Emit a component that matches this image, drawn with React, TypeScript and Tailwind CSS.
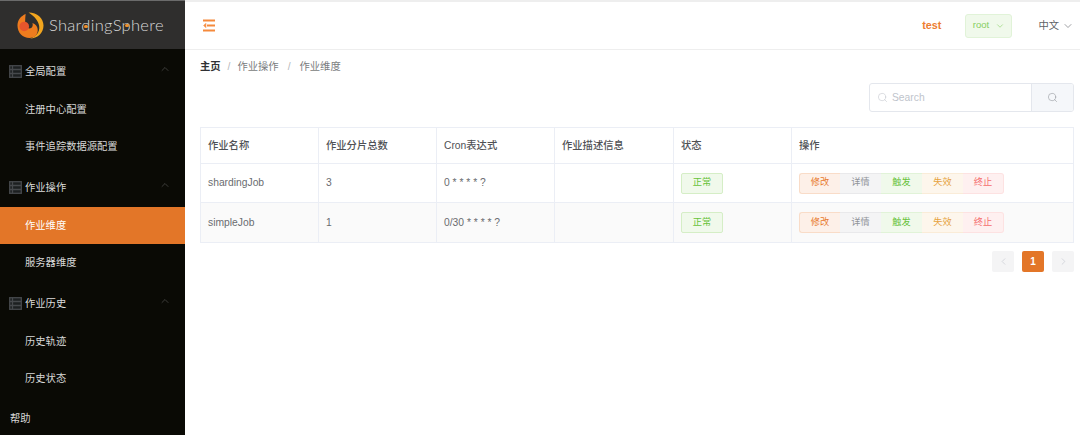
import { ChevronDown, ChevronLeft, ChevronRight, ChevronUp, Search } from 'lucide-react'

const rows = [
  { name: 'shardingJob', total: '3', cron: '0 * * * * ?', striped: false },
  { name: 'simpleJob', total: '1', cron: '0/30 * * * * ?', striped: true },
]

const actions = [
  { label: '修改', className: 'bg-[#fdf0e8] border-[#f9dcc8] text-[#e87a2c] border-l rounded-l-[3px]' },
  { label: '详情', className: 'bg-[#f4f4f5] border-[#e9e9eb] text-[#909399]' },
  { label: '触发', className: 'bg-[#f0f9eb] border-[#e1f3d8] text-[#67c23a]' },
  { label: '失效', className: 'bg-[#fdf6ec] border-[#faecd8] text-[#e6a23c]' },
  { label: '终止', className: 'bg-[#fef0f0] border-[#fde2e2] text-[#f56c6c] border-r rounded-r-[3px]' },
]

function Logo() {
  return (
    <svg width="27" height="27" viewBox="0 0 28 28" className="shrink-0">
      <path d="M12 0.5c9 0 15.500 6 15.500 13.500 0 8-6.500 13.500-14 13.500 6-2 10.500-6.500 9.500-13-0.700-5.500-5-10-11-14z" fill="#f2a51e" />
      <path d="M9 2C4 4 0.500 8.500 0.500 14c0 7.500 5.500 13 12.500 13 5 0 8.500-3.500 8.500-8 0-4-2.500-6.500-5.500-7.500 1 3-0.500 5.500-3 5.500-3 0-4.500-2.500-4.500-5.500 0-3.500 0-6.500 0.500-9.500z" fill="#ee7c1e" />
      <circle cx="7.500" cy="15" r="5" fill="#e6562c" />
    </svg>
  )
}

function ListIcon() {
  return (
    <svg width="13" height="13" viewBox="0 0 13 13" className="shrink-0" fill="none" stroke="#46494c" strokeWidth="1.3">
      <rect x="0.7" y="0.7" width="11.6" height="11.6" fill="#1d2021" />
      <path d="M0.7 4.500h11.600M0.7 8.500h11.600M3.500 0.700v11.600" />
    </svg>
  )
}

function MenuGroup({ title }: { title: string }) {
  return (
    <div className="h-[42px] pt-[3px] flex items-center pl-[9px] pr-[14px] text-[#dcdcdc]">
      <ListIcon />
      <span className="ml-[3px]">{title}</span>
      <ChevronUp className="ml-auto mb-[5px] text-[#5e5e5e]" size={12} strokeWidth={1.2} />
    </div>
  )
}

function MenuItem({ title, active }: { title: string; active?: boolean }) {
  return (
    <div className={`h-[37px] pt-[1px] flex items-center pl-[25px] ${active ? 'bg-[#e37628] text-white' : 'text-[#d8d8d8]'}`}>
      {title}
    </div>
  )
}

function Sidebar() {
  return (
    <aside className="w-[185px] shrink-0 bg-[#0a0a05] text-[10.3px] overflow-hidden">
      <div className="h-[49px] bg-[#2f2e2d] border-t-[1px] border-[#6b6b6b] flex items-center pl-[17px]">
        <Logo />
        <span className="relative ml-[5px] text-[16.5px] font-light tracking-[0.3px] text-[#d9d9d9] font-['Lato',sans-serif]">
          ShardingSphere
          <span className="absolute left-[35px] top-[12px] w-[4px] h-[3px] rounded-full bg-[#f0902a]" />
          <span className="absolute left-[76px] top-[11px] w-[4px] h-[3px] rounded-full bg-[#f0902a]" />
        </span>
      </div>
      <MenuGroup title="全局配置" />
      <MenuItem title="注册中心配置" />
      <MenuItem title="事件追踪数据源配置" />
      <MenuGroup title="作业操作" />
      <MenuItem title="作业维度" active />
      <MenuItem title="服务器维度" />
      <MenuGroup title="作业历史" />
      <MenuItem title="历史轨迹" />
      <MenuItem title="历史状态" />
      <div className="h-[42px] pt-[1px] flex items-center pl-[10px] text-[#d8d8d8]">帮助</div>
    </aside>
  )
}

function Header() {
  return (
    <header className="h-[50px] shrink-0 border-t-[2px] border-b-[1px] border-[#eeeeee] flex items-center pl-[18px] pr-[6px]">
      <svg width="12" height="13" viewBox="0 0 12 13" fill="none" stroke="#f58a3c" strokeWidth="2">
        <path d="M0 1.500h12M4 6.500h8M0 11.500h12" />
        <path d="M2.800 4.500L0.800 6.500l2 2z" fill="#f58a3c" strokeWidth="0.8" />
      </svg>
      <span className="ml-auto text-[10.8px] font-bold text-[#ed7d31]">test</span>
      <div className="ml-[24px] w-[47px] h-[24px] rounded-[3px] bg-[#f0f9eb] border border-[#e1f3d8] flex items-center justify-center gap-[6px] text-[9.5px] text-[#85ce61]">
        root
        <ChevronDown size={10} strokeWidth={1.4} />
      </div>
      <span className="ml-[26px] text-[10.3px] text-[#606266]">中文</span>
      <ChevronDown className="ml-[3px] text-[#606266]" size={12} strokeWidth={1.2} />
    </header>
  )
}

function JobTable() {
  return (
    <div className="mt-[15px] border-t border-l border-[#ebeef5] grid grid-cols-[118px_118px_118px_119px_118px_1fr] text-[10.3px] text-[#6a6c70]">
      {['作业名称', '作业分片总数', 'Cron表达式', '作业描述信息', '状态', '操作'].map(title => (
        <div key={title} className="h-[36px] px-[7px] flex items-center font-medium text-[#4f5155] border-r border-b border-[#ebeef5]">
          {title}
        </div>
      ))}
      {rows.map(row => {
        const cell = `px-[7px] flex items-center border-r border-b border-[#ebeef5] ${row.striped ? 'h-[40px] bg-[#fafafa]' : 'h-[39px]'}`
        return [
          <div key={row.name + 'name'} className={cell}>{row.name}</div>,
          <div key={row.name + 'total'} className={cell}>{row.total}</div>,
          <div key={row.name + 'cron'} className={cell}>{row.cron}</div>,
          <div key={row.name + 'desc'} className={cell}></div>,
          <div key={row.name + 'state'} className={cell}>
            <span className="w-[42px] h-[21px] rounded-[2px] bg-[#f0f9eb] border border-[#d5eec6] text-[#67c23a] text-[9.2px] flex items-center justify-center">正常</span>
          </div>,
          <div key={row.name + 'actions'} className={cell}>
            <div className="flex">
              {actions.map(action => (
                <span key={action.label} className={`w-[41px] h-[21px] border-y text-[9.2px] flex items-center justify-center ${action.className}`}>
                  {action.label}
                </span>
              ))}
            </div>
          </div>,
        ]
      })}
    </div>
  )
}

export default function App() {
  return (
    <div className="w-[1080px] h-[435px] flex overflow-hidden bg-white font-['Liberation_Sans','Noto_Sans_CJK_SC',sans-serif]">
      <Sidebar />
      <main className="flex-1 flex flex-col min-w-0">
        <Header />
        <div className="pt-[10px] pl-[15px] pr-[6px]">
          <div className="h-[13px] flex items-center text-[10.3px] text-[#7a7c80]">
            <span className="font-bold text-[#303133]">主页</span>
            <span className="mx-[7px] text-[#b5b7ba]">/</span>
            <span>作业操作</span>
            <span className="mx-[9px] text-[#b5b7ba]">/</span>
            <span>作业维度</span>
          </div>
          <div className="mt-[10px] flex justify-end">
            <div className="w-[205px] h-[29px] flex border border-[#e4e7ed] rounded-[3px] overflow-hidden">
              <div className="flex-1 flex items-center pl-[7px] gap-[4px] text-[10.3px] text-[#c0c4cc]">
                <Search size={11} strokeWidth={1.2} />
                Search
              </div>
              <div className="w-[42px] bg-[#f5f7fa] border-l border-[#e4e7ed] flex items-center justify-center text-[#909399]">
                <Search size={11} strokeWidth={1.2} />
              </div>
            </div>
          </div>
          <JobTable />
          <div className="mt-[8px] flex justify-end gap-[8px]">
            <div className="w-[22px] h-[21px] bg-[#f4f4f5] rounded-[2px] flex items-center justify-center text-[#c0c4cc]">
              <ChevronLeft size={11} strokeWidth={1.3} />
            </div>
            <div className="w-[22px] h-[21px] bg-[#e37628] rounded-[2px] flex items-center justify-center text-white text-[10px] font-bold">1</div>
            <div className="w-[22px] h-[21px] bg-[#f4f4f5] rounded-[2px] flex items-center justify-center text-[#c0c4cc]">
              <ChevronRight size={11} strokeWidth={1.3} />
            </div>
          </div>
        </div>
      </main>
    </div>
  )
}
